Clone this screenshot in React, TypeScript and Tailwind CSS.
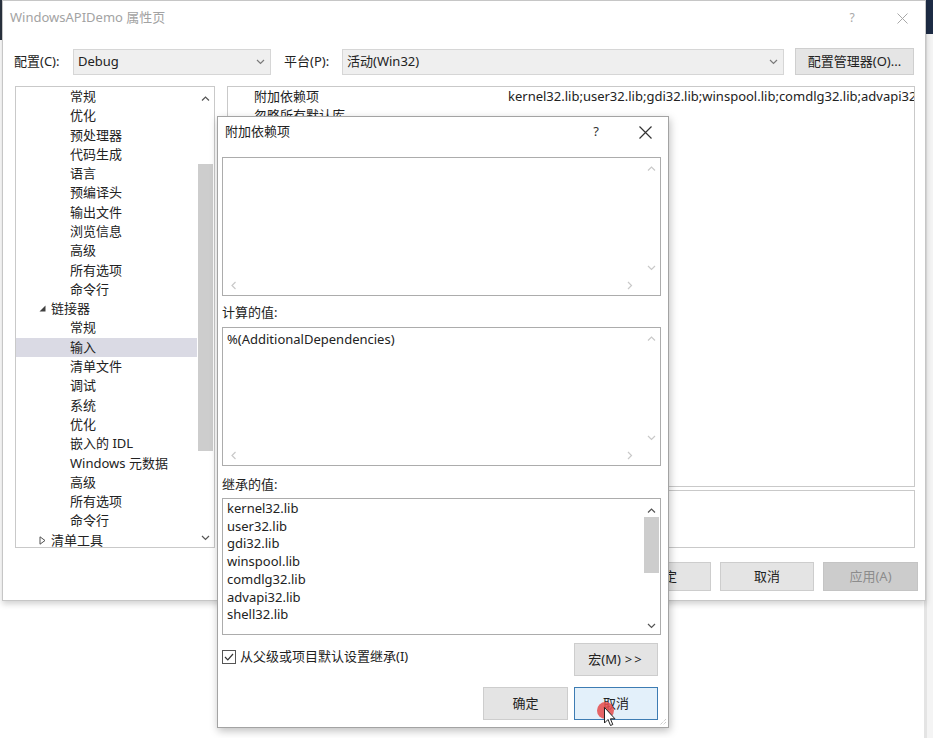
import React from "react";

type Dir = "up" | "down" | "left" | "right";

function Chevron({ dir, className }: { dir: Dir; className?: string }) {
  const paths: Record<Dir, string> = {
    up: "M1 5.5 L4.5 2 L8 5.5",
    down: "M1 2 L4.5 5.5 L8 2",
    left: "M5.5 1 L2 4.5 L5.5 8",
    right: "M2 1 L5.5 4.5 L2 8",
  };
  const vertical = dir === "up" || dir === "down";
  return (
    <svg
      width={vertical ? 9 : 7}
      height={vertical ? 7 : 9}
      viewBox={vertical ? "0 0 9 7" : "0 0 7 9"}
      className={className}
    >
      <path d={paths[dir]} fill="none" stroke="currentColor" strokeWidth="1.2" />
    </svg>
  );
}

const tree: { label: string; level: number; mark?: string; selected?: boolean }[] = [
  { label: "常规", level: 2 },
  { label: "优化", level: 2 },
  { label: "预处理器", level: 2 },
  { label: "代码生成", level: 2 },
  { label: "语言", level: 2 },
  { label: "预编译头", level: 2 },
  { label: "输出文件", level: 2 },
  { label: "浏览信息", level: 2 },
  { label: "高级", level: 2 },
  { label: "所有选项", level: 2 },
  { label: "命令行", level: 2 },
  { label: "链接器", level: 1, mark: "open" },
  { label: "常规", level: 2 },
  { label: "输入", level: 2, selected: true },
  { label: "清单文件", level: 2 },
  { label: "调试", level: 2 },
  { label: "系统", level: 2 },
  { label: "优化", level: 2 },
  { label: "嵌入的 IDL", level: 2 },
  { label: "Windows 元数据", level: 2 },
  { label: "高级", level: 2 },
  { label: "所有选项", level: 2 },
  { label: "命令行", level: 2 },
  { label: "清单工具", level: 1, mark: "closed" },
];

const inherited = [
  "kernel32.lib",
  "user32.lib",
  "gdi32.lib",
  "winspool.lib",
  "comdlg32.lib",
  "advapi32.lib",
  "shell32.lib",
];

function TreeRow({ item }: { item: (typeof tree)[number] }) {
  return (
    <div
      className={`flex h-[19.3px] items-center ${item.selected ? "bg-[#dadae4]" : ""} ${
        item.level === 1 ? "pl-[23px]" : "pl-[54px]"
      }`}
    >
      {item.mark === "open" && (
        <svg width="7" height="7" viewBox="0 0 7 7" className="mr-[5px]">
          <path d="M6.5 0.5 L6.5 6.5 L0.5 6.5 Z" fill="#404040" />
        </svg>
      )}
      {item.mark === "closed" && (
        <svg width="7" height="9" viewBox="0 0 7 9" className="mr-[5px]">
          <path d="M1 0.8 L6 4.5 L1 8.2 Z" fill="none" stroke="#505050" strokeWidth="1" />
        </svg>
      )}
      <span className="whitespace-nowrap">{item.label}</span>
    </div>
  );
}

function EditBox({ children }: { children?: React.ReactNode }) {
  return (
    <div className="flex h-[139px] w-[439px] flex-col border border-[#acacac] bg-white">
      <div className="flex min-h-0 flex-1">
        <div className="flex-1 pl-[4px] pt-[1px]">{children}</div>
        <div className="flex w-[17px] flex-col items-center justify-between pb-[5px] pt-[7px] text-[#c9c9c9]">
          <Chevron dir="up" />
          <Chevron dir="down" />
        </div>
      </div>
      <div className="flex h-[19px] items-center justify-between pl-[7px] pr-[27px] text-[#c9c9c9]">
        <Chevron dir="left" />
        <Chevron dir="right" />
      </div>
    </div>
  );
}

export default function App() {
  return (
    <div className="relative h-[738px] w-[933px] overflow-hidden bg-white font-['Noto_Sans','Noto_Sans_CJK_SC',sans-serif] text-[13px] text-[#222]">
      {/* desktop behind the window */}
      <div className="absolute left-0 top-0 h-[40px] w-[3px] bg-[#2a3340]" />
      <div className="absolute right-0 top-0 h-[34px] w-[9px] bg-[#1d2c45]" />
      <div className="absolute right-0 top-[34px] h-[704px] w-[9px] border-l-[3px] border-[#e4e4e4] bg-[#f4f4f4]" />

      {/* property pages window */}
      <div className="absolute left-[2px] top-0 flex h-[601px] w-[924px] flex-col border border-[#c6c6c6] bg-white shadow-[0_3px_6px_rgba(0,0,0,0.18)]">
        <div className="flex h-[34px] items-center pl-[7px] pr-[13px]">
          <span className="text-[13px] text-[#a3a3a3]">WindowsAPIDemo 属性页</span>
          <span className="ml-auto w-[20px] text-center text-[12px] text-[#a8a8a8]">?</span>
          <span className="ml-[30px] flex w-[20px] justify-center text-[#a8a8a8]">
            <svg width="11" height="11" viewBox="0 0 11 11">
              <path d="M0.5 0.5 L10.5 10.5 M10.5 0.5 L0.5 10.5" stroke="currentColor" strokeWidth="1" />
            </svg>
          </span>
        </div>

        <div className="mt-[13px] flex h-[27px] items-center pl-[11px]">
          <span className="w-[59px]">配置(C):</span>
          <div className="flex h-[26px] w-[198px] items-center border border-[#d6d6d6] bg-[#efefef] pl-[4px] pr-[5px]">
            <span>Debug</span>
            <Chevron dir="down" className="ml-auto text-[#7a7a7a]" />
          </div>
          <span className="ml-[13px] w-[58px]">平台(P):</span>
          <div className="flex h-[26px] w-[442px] items-center border border-[#d6d6d6] bg-[#efefef] pl-[4px] pr-[5px]">
            <span>活动(Win32)</span>
            <Chevron dir="down" className="ml-auto text-[#7a7a7a]" />
          </div>
          <div className="ml-[11px] flex h-[27px] w-[119px] items-center justify-center border border-[#cfcfcf] bg-[#e5e5e5]">
            配置管理器(O)...
          </div>
        </div>

        <div className="mt-[11px] flex pl-[12px]">
          <div className="flex h-[462px] w-[200px] border border-[#c9c9c9] bg-white">
            <div className="flex-1 overflow-hidden">
              {tree.map((item, i) => (
                <TreeRow key={i} item={item} />
              ))}
            </div>
            <div className="flex w-[17px] flex-col items-center pb-[6px] pt-[8px] text-[#555]">
              <Chevron dir="up" />
              <div className="mt-[62px] h-[287px] w-[15px] bg-[#cdcdcd]" />
              <Chevron dir="down" className="mt-auto" />
            </div>
          </div>

          <div className="ml-[12px] flex w-[688px] flex-col">
            <div className="h-[401px] overflow-hidden border border-[#c9c9c9] bg-white">
              <div className="flex h-[19px] items-center pl-[26px]">
                <span className="w-[254px] shrink-0">附加依赖项</span>
                <span className="whitespace-nowrap">
                  kernel32.lib;user32.lib;gdi32.lib;winspool.lib;comdlg32.lib;advapi32.lib
                </span>
              </div>
              <div className="flex h-[19px] items-center pl-[26px]">
                <span>忽略所有默认库</span>
              </div>
            </div>
            <div className="mt-[3px] h-[58px] border border-[#c9c9c9] bg-white" />
          </div>
        </div>

        <div className="mt-[14px] flex h-[29px] justify-end gap-[9px] pr-[7px]">
          <div className="flex w-[94px] items-center justify-center border border-[#cdcdcd] bg-[#e4e4e4]">确定</div>
          <div className="flex w-[94px] items-center justify-center border border-[#cdcdcd] bg-[#e4e4e4]">取消</div>
          <div className="flex w-[95px] items-center justify-center border border-[#c4c4c4] bg-[#cccccc] text-[#8c8c8c]">
            应用(A)
          </div>
        </div>
      </div>

      {/* additional dependencies dialog */}
      <div className="absolute left-[217px] top-[116px] flex h-[612px] w-[452px] flex-col border border-[#a3a3a3] bg-white pl-[4px] shadow-[1px_3px_8px_rgba(0,0,0,0.25)]">
        <div className="flex h-[30px] items-center pl-[3px] pr-[16px]">
          <span>附加依赖项</span>
          <span className="ml-auto w-[14px] text-center text-[13px] text-[#333]">?</span>
          <span className="ml-[35px] flex w-[14px] justify-center text-[#333]">
            <svg width="13" height="13" viewBox="0 0 13 13">
              <path d="M0.5 0.5 L12.5 12.5 M12.5 0.5 L0.5 12.5" stroke="currentColor" strokeWidth="1.2" />
            </svg>
          </span>
        </div>

        <div className="mt-[10px]">
          <EditBox />
        </div>

        <div className="flex h-[31px] items-center pt-[3px]">计算的值:</div>
        <EditBox>
          <div className="pt-[1px]">%(AdditionalDependencies)</div>
        </EditBox>

        <div className="flex h-[32px] items-center pt-[6px]">继承的值:</div>
        <div className="flex h-[137px] w-[439px] border border-[#acacac] bg-white">
          <div className="flex-1 pl-[4px] pt-[1px] leading-[17.7px]">
            {inherited.map((lib) => (
              <div key={lib}>{lib}</div>
            ))}
          </div>
          <div className="flex w-[17px] flex-col items-center pb-[5px] pt-[8px] text-[#555]">
            <Chevron dir="up" />
            <div className="mt-[3px] h-[56px] w-[15px] bg-[#cdcdcd]" />
            <Chevron dir="down" className="mt-auto" />
          </div>
        </div>

        <div className="mt-[8px] flex h-[33px] w-[436px] items-start">
          <div className="mt-[4px] flex items-center">
            <div className="flex h-[14px] w-[14px] items-center justify-center border border-[#555] bg-white">
              <svg width="10" height="8" viewBox="0 0 10 8">
                <path d="M1 4 L3.8 6.8 L9 1" fill="none" stroke="#333" strokeWidth="1.2" />
              </svg>
            </div>
            <span className="ml-[4px]">从父级或项目默认设置继承(I)</span>
          </div>
          <div className="ml-auto flex h-[33px] w-[84px] items-center justify-center border border-[#cdcdcd] bg-[#e4e4e4]">
            宏(M) <span className="ml-[4px] tracking-[2px]">&gt;&gt;</span>
          </div>
        </div>

        <div className="mt-[11px] flex h-[33px] w-[436px] justify-end gap-[6px]">
          <div className="flex w-[85px] items-center justify-center border border-[#cdcdcd] bg-[#e4e4e4]">确定</div>
          <div className="flex w-[84px] items-center justify-center border border-[#3d7cb3] bg-[#e3f0fa]">取消</div>
        </div>

        {/* resize grip */}
        <svg width="8" height="8" viewBox="0 0 8 8" className="absolute bottom-[1px] right-[1px]">
          <path d="M7 1 L1 7 M7 4 L4 7" stroke="#b5b5b5" strokeWidth="1" strokeDasharray="1 1" />
        </svg>
      </div>

      {/* click marker and mouse pointer */}
      <div className="absolute left-[597px] top-[702px] h-[17px] w-[17px] rounded-full bg-[#e54b4b] opacity-85" />
      <svg width="13" height="21" viewBox="0 0 13 21" className="absolute left-[604px] top-[707px]">
        <path
          d="M0.5 0.5 L0.5 16 L4 12.5 L6.5 18.5 L8.8 17.5 L6.4 11.8 L11 11.8 Z"
          fill="white"
          stroke="#222"
          strokeWidth="1"
        />
      </svg>
    </div>
  );
}
